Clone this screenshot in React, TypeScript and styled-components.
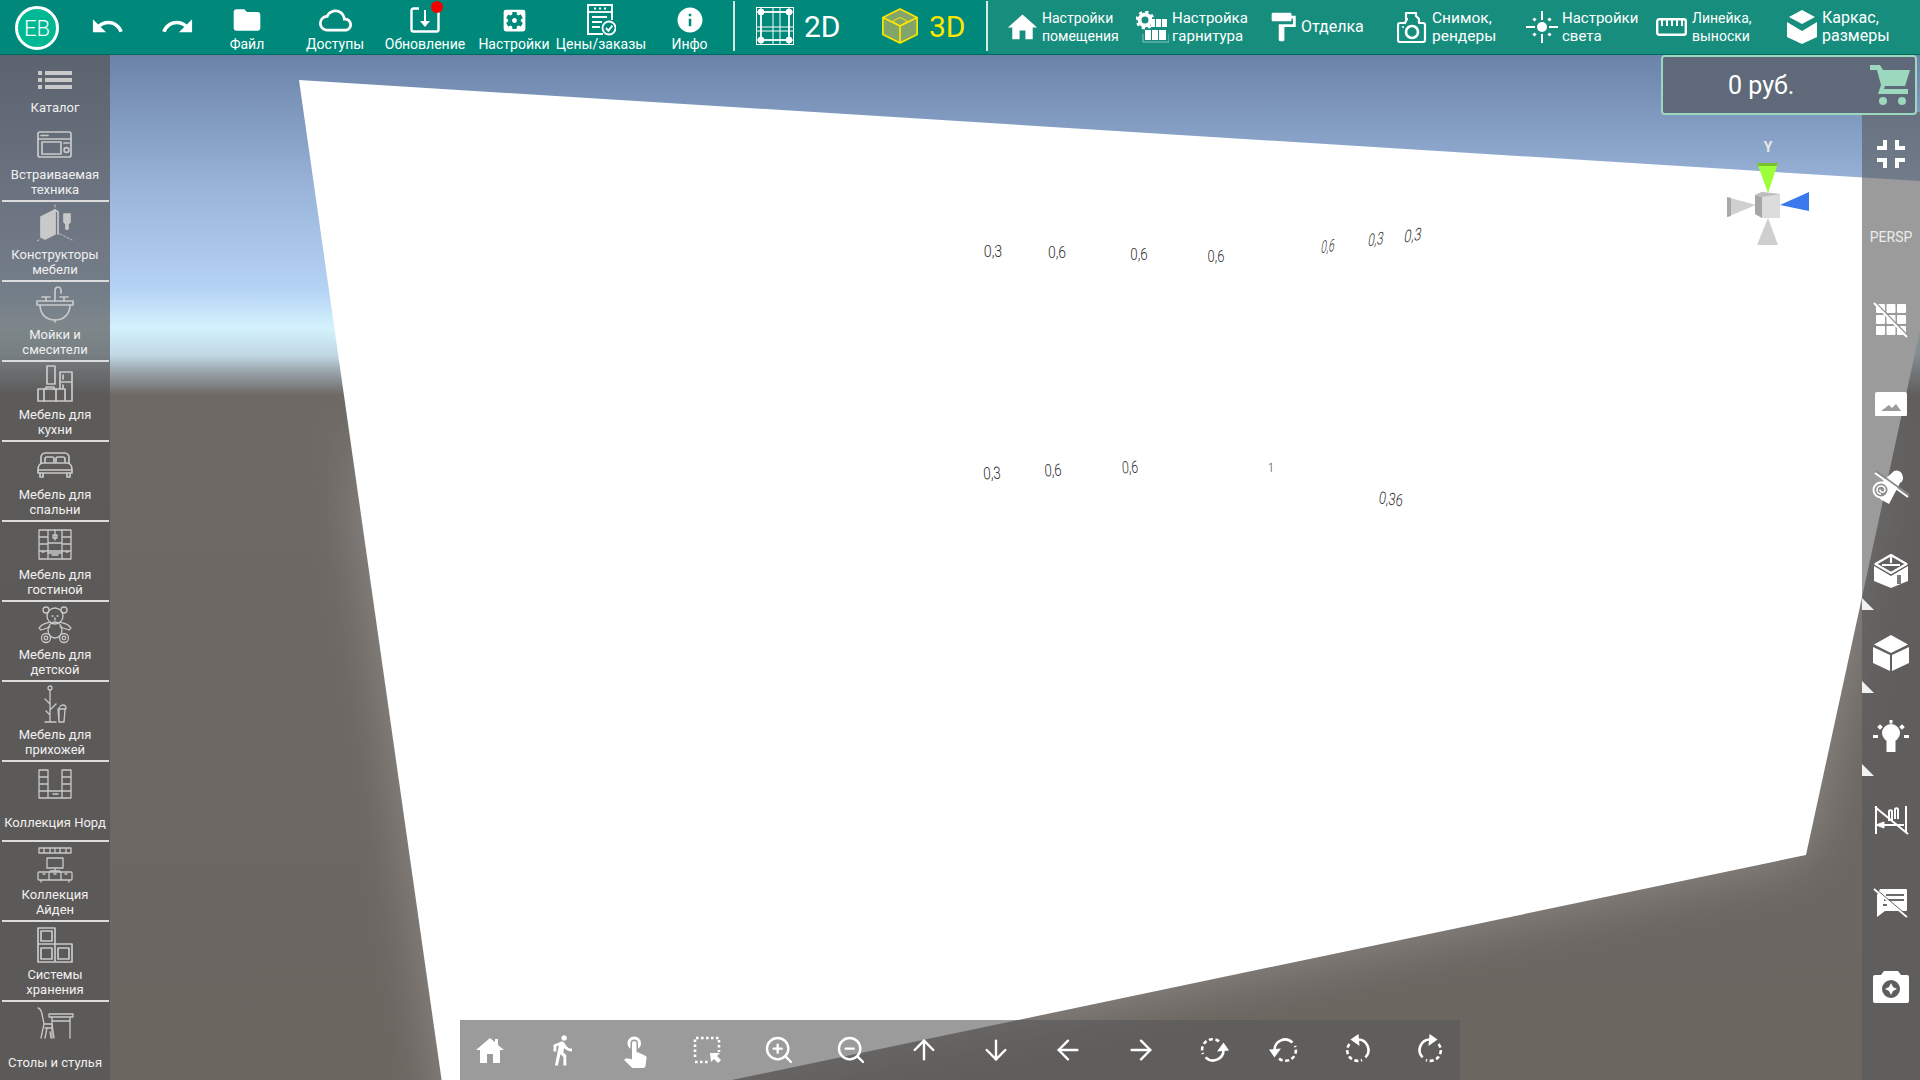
import React from "react"
import styled, { createGlobalStyle } from "styled-components"
import {
  MdCloudQueue,
  MdDirectionsWalk,
  MdFolder,
  MdFormatPaint,
  MdFullscreenExit,
  MdHome,
  MdInfo,
  MdRedo,
  MdSettingsApplications,
  MdTouchApp,
  MdUndo,
} from "react-icons/md"
import { ArrowDown, ArrowLeft, ArrowRight, ArrowUp, ZoomIn, ZoomOut } from "lucide-react"

const GlobalStyle = createGlobalStyle`
  html, body {
    margin: 0;
    padding: 0;
    background: #6c6661;
  }
  body {
    font-family: Roboto, "Liberation Sans", sans-serif;
  }
`

const Screen = styled.div`
  position: relative;
  width: 1920px;
  height: 1080px;
  overflow: hidden;
  display: flex;
  flex-direction: column;
  background: linear-gradient(
    to bottom,
    #6b83a8 55px,
    #9ab4da 190px,
    #b5d3f5 290px,
    #d3f2fc 328px,
    #c0d8e4 355px,
    #9aa3aa 372px,
    #6e6965 395px,
    #6c6661 1080px
  );
`

const SceneCanvas = styled.svg`
  position: absolute;
  left: 0;
  top: 0;
`

const DimLabel = styled.span<{ $x: number; $y: number; $tf: string; $size?: number }>`
  position: absolute;
  left: ${(p) => p.$x}px;
  top: ${(p) => p.$y}px;
  transform: translate(-50%, -50%) ${(p) => p.$tf};
  font-size: ${(p) => p.$size ?? 17}px;
  font-weight: 300;
  color: #2e2e2e;
  white-space: nowrap;
`

const TopBar = styled.header`
  position: relative;
  display: flex;
  height: 54px;
  flex-shrink: 0;
  background: #00897b;
  border-bottom: 1px solid #00695c;
  color: #fff;
`

const Avatar = styled.div`
  width: 38px;
  height: 38px;
  margin: 6px 14px 0 15px;
  border: 3px solid #fff;
  border-radius: 50%;
  background: #00b894;
  display: flex;
  align-items: center;
  justify-content: center;
  font-size: 22px;
  font-weight: 300;
  flex-shrink: 0;
`

const HistoryButton = styled.div`
  width: 70px;
  display: flex;
  align-items: center;
  justify-content: center;
  padding-bottom: 2px;
  margin-left: -1px;
  margin-right: 1px;
`

const NavItem = styled.div<{ $w: number; $ml?: number }>`
  width: ${(p) => p.$w}px;
  margin-left: ${(p) => p.$ml ?? 0}px;
  position: relative;
  display: flex;
  flex-direction: column;
  align-items: center;
  padding-top: 4px;
`

const NavIcon = styled.div`
  height: 32px;
  display: flex;
  align-items: center;
  justify-content: center;
`

const NavLabel = styled.span`
  font-size: 14px;
  line-height: 16px;
  white-space: nowrap;
`

const RedDot = styled.span`
  position: absolute;
  left: 52px;
  top: 1px;
  width: 12px;
  height: 12px;
  border-radius: 50%;
  background: #f40000;
`

const Separator = styled.div`
  width: 2px;
  height: 50px;
  margin-top: 1px;
  background: #d6e8e4;
  flex-shrink: 0;
`

const ViewSwitch = styled.div`
  width: 251px;
  display: flex;
  align-items: center;
  padding: 0 0 2px 21px;
  box-sizing: border-box;
`

const ViewButton = styled.div<{ $active?: boolean; $w: number }>`
  width: ${(p) => p.$w}px;
  display: flex;
  align-items: center;
  gap: 10px;
  font-size: 30px;
  font-weight: 400;
  color: ${(p) => (p.$active ? "#ffe600" : "#fff")};
`

const ToolSection = styled.div`
  flex: 1;
  display: flex;
  padding-left: 20px;
  background: #178d7d;
`

const ToolItem = styled.div<{ $w: number; $iconW: number; $gap: number }>`
  width: ${(p) => p.$w}px;
  display: grid;
  grid-template-columns: ${(p) => p.$iconW}px 1fr;
  column-gap: ${(p) => p.$gap}px;
  align-items: center;
  flex-shrink: 0;
`

const ToolText = styled.div<{ $size: number }>`
  font-size: ${(p) => p.$size}px;
  line-height: 18px;
  white-space: nowrap;
`

const Body = styled.div`
  position: relative;
  flex: 1;
  display: flex;
  min-height: 0;
`

const LeftPanel = styled.nav`
  width: 110px;
  flex-shrink: 0;
  background: rgba(84, 84, 84, 0.68);
  display: flex;
  flex-direction: column;
`

const CatalogItem = styled.div<{ $first?: boolean }>`
  height: ${(p) => (p.$first ? 66 : 80)}px;
  flex-shrink: 0;
  box-sizing: border-box;
  position: relative;
  padding-top: ${(p) => (p.$first ? 13 : 1)}px;
  display: flex;
  flex-direction: column;
  align-items: center;
  &::after {
    content: ${(p) => (p.$first ? "none" : '""')};
    position: absolute;
    left: 2px;
    right: 1px;
    bottom: -1px;
    height: 2px;
    background: #dcdcdc;
  }
`

const CatalogIcon = styled.div<{ $first?: boolean }>`
  height: ${(p) => (p.$first ? 24 : 45)}px;
  display: flex;
  align-items: center;
  justify-content: center;
  flex-shrink: 0;
`

const CatalogLabel = styled.div`
  height: 30px;
  width: 110px;
  flex-shrink: 0;
  display: flex;
  align-items: center;
  justify-content: center;
  text-align: center;
  font-size: 13px;
  line-height: 15px;
  color: #f0f0f0;
  white-space: pre-line;
`

const Glyph = styled.svg`
  width: 42px;
  height: 42px;
  fill: none;
  stroke: #c9c9c9;
  stroke-width: 1.7;
  stroke-linejoin: round;
  stroke-linecap: round;
  overflow: visible;
`

const Stage = styled.main`
  position: relative;
  flex: 1;
  display: flex;
  align-items: flex-end;
  padding-left: 350px;
`

const BottomBar = styled.div`
  width: 1000px;
  height: 60px;
  display: flex;
  justify-content: space-between;
  background: rgba(88, 88, 88, 0.6);
`

const BottomButton = styled.div`
  width: 60px;
  display: flex;
  align-items: center;
  justify-content: center;
  color: #fff;
`

const Gizmo = styled.svg`
  position: absolute;
  left: 1600px;
  top: 75px;
  overflow: visible;
`

const CartBox = styled.div`
  position: absolute;
  left: 1551px;
  top: 0;
  width: 256px;
  height: 60px;
  box-sizing: border-box;
  border: 2px solid #9bd8bd;
  border-radius: 4px;
  background: #5f6979;
  color: #fff;
  font-size: 25px;
  display: flex;
  align-items: center;
  padding-left: 65px;
  z-index: 2;
`

const CartIcon = styled.svg`
  position: absolute;
  right: 5px;
  top: 8px;
`

const RightPanel = styled.aside`
  width: 58px;
  margin-top: 57px;
  flex-shrink: 0;
  background: rgba(88, 88, 88, 0.6);
  display: flex;
  flex-direction: column;
`

const RightButton = styled.div<{ $mark?: boolean }>`
  position: relative;
  height: 83.3px;
  flex-shrink: 0;
  display: flex;
  align-items: center;
  justify-content: center;
  color: #fff;
  &::after {
    content: ${(p) => (p.$mark ? '""' : "none")};
    position: absolute;
    left: 0;
    bottom: 2px;
    width: 0;
    height: 0;
    border-style: solid;
    border-width: 12px 0 0 12px;
    border-color: transparent transparent transparent #f2f2f2;
  }
`

const PerspLabel = styled.span`
  font-size: 14px;
  color: #ececec;
`

const dims = [
  { t: "0,3", x: 993, y: 251, tf: "scaleX(.84)" },
  { t: "0,6", x: 1057, y: 252, tf: "scaleX(.82)" },
  { t: "0,6", x: 1139, y: 254, tf: "scaleX(.78)" },
  { t: "0,6", x: 1216, y: 256, tf: "scaleX(.76)" },
  { t: "0,6", x: 1328, y: 246, tf: "skewY(-10deg) skewX(-8deg) scaleX(.6)" },
  { t: "0,3", x: 1376, y: 239, tf: "skewY(-10deg) skewX(-8deg) scaleX(.7)" },
  { t: "0,3", x: 1413, y: 235, tf: "skewY(-10deg) skewX(-8deg) scaleX(.78)" },
  { t: "0,3", x: 992, y: 473, tf: "rotate(-3deg) scaleX(.8)" },
  { t: "0,6", x: 1053, y: 470, tf: "rotate(-3deg) scaleX(.78)" },
  { t: "0,6", x: 1130, y: 467, tf: "rotate(-3deg) scaleX(.74)" },
  { t: "1", x: 1271, y: 467, tf: "scaleX(.8)", size: 13 },
  { t: "0,36", x: 1391, y: 499, tf: "rotate(8deg) scaleX(.76)" },
]

function CameraTool() {
  return (
    <svg width="30" height="32" viewBox="0 0 30 32" fill="none" stroke="#fff" strokeWidth="2.2" strokeLinejoin="round">
      <path d="M3 12h5l2-4h-1V2h10v3l3 3v4h4c1 0 2 1 2 2v15c0 1-1 2-2 2H3c-1 0-2-1-2-2V14c0-1 1-2 2-2z" />
      <circle cx="15" cy="21" r="6" strokeWidth="2.6" />
      <circle cx="6" cy="16" r="1" fill="#fff" stroke="none" />
    </svg>
  )
}

function LightTool() {
  return (
    <svg width="32" height="32" viewBox="0 0 32 32" fill="#fff">
      <circle cx="16" cy="16" r="5" />
      <rect x="15" y="0" width="2" height="9" />
      <rect x="15" y="23" width="2" height="9" />
      <rect x="0" y="15" width="9" height="2" />
      <rect x="23" y="15" width="9" height="2" />
      <rect x="7" y="7" width="3" height="3" transform="rotate(45 8.5 8.5)" />
      <rect x="22" y="7" width="3" height="3" transform="rotate(45 23.5 8.5)" />
      <rect x="7" y="22" width="3" height="3" transform="rotate(45 8.5 23.5)" />
      <rect x="22" y="22" width="3" height="3" transform="rotate(45 23.5 23.5)" />
    </svg>
  )
}

function RulerTool() {
  return (
    <svg width="31" height="18" viewBox="0 0 31 18" fill="none" stroke="#fff" strokeWidth="2.4">
      <rect x="1.2" y="1.2" width="28.6" height="15.6" rx="2" />
      <path d="M6 2v6M11 2v6M16 2v6M21 2v6M26 2v6" strokeWidth="2" />
    </svg>
  )
}

function CubeTool() {
  return (
    <svg width="30" height="34" viewBox="0 0 30 34" fill="#fff">
      <path d="M15 0l13 7-13 7L2 7z" />
      <path d="M0 12l15 9 15-9v15l-15 7-15-7z" />
    </svg>
  )
}

function KitchenTool() {
  return (
    <svg width="33" height="32" viewBox="0 0 33 32" fill="#fff">
      <circle cx="9" cy="9" r="5.5" fill="none" stroke="#fff" strokeWidth="4" />
      <circle cx="9" cy="9" r="8" fill="none" stroke="#fff" strokeWidth="3" strokeDasharray="3 3.3" />
      <rect x="15" y="8" width="4" height="8" />
      <rect x="20" y="8" width="5" height="8" />
      <rect x="26" y="8" width="5" height="8" />
      <rect x="9" y="19" width="6" height="10" />
      <rect x="16" y="19" width="6" height="10" />
      <rect x="23" y="19" width="7" height="10" />
      <path d="M7 23v8h26v-8" fill="none" stroke="#fff" strokeOpacity=".5" />
    </svg>
  )
}

function UpdateIcon() {
  return (
    <svg width="30" height="26" viewBox="0 0 30 26" fill="none" stroke="#fff">
      <path d="M9 1.5H3.5a2 2 0 0 0-2 2v19a2 2 0 0 0 2 2h23a2 2 0 0 0 2-2V1.5" strokeWidth="2.4" />
      <path d="M15 3v14" strokeWidth="2" />
      <path d="M10 14h10l-5 6z" fill="#fff" stroke="none" />
    </svg>
  )
}

function PricesIcon() {
  return (
    <svg width="30" height="32" viewBox="0 0 30 32" fill="none" stroke="#fff" strokeWidth="1.8">
      <path d="M17 30H2V1h24v15" strokeWidth="2" />
      <path d="M2 8h24" />
      <path d="M8 4.5h2M13 4.5h2M18 4.5h2" strokeWidth="2" />
      <path d="M6 13h15M6 18h10M6 23h8" strokeWidth="2" />
      <circle cx="23" cy="24" r="6.5" fill="#00897b" />
      <path d="M20 24l2.4 2.6 4-5" strokeWidth="2" />
    </svg>
  )
}

function GridViewIcon() {
  return (
    <svg width="38" height="38" viewBox="0 0 38 38" fill="none" stroke="#fff" strokeWidth="1">
      <rect x=".5" y=".5" width="37" height="37" />
      <path d="M5 1v36M17 1v36M24 1v36M33 1v36M1 5h36M1 20h36M1 24h36M1 33h36" />
      <rect x="5" y="5" width="28" height="28" strokeWidth="1.6" />
      <circle cx="5" cy="5" r="3" fill="#fff" />
      <circle cx="33" cy="5" r="3" fill="#fff" />
      <circle cx="5" cy="33" r="3" fill="#fff" />
      <circle cx="33" cy="33" r="3" fill="#fff" />
    </svg>
  )
}

function CubeViewIcon() {
  return (
    <svg width="38" height="38" viewBox="0 0 40 38" fill="#82a569" stroke="#ffe600" strokeWidth="1.8" strokeLinejoin="round">
      <path d="M20 1l18 9v18l-18 9-18-9V10z" />
      <path d="M2 10l18 9 18-9M20 19v18" fill="none" />
      <path d="M20 10l-8 4 8 5 8-5z" fill="none" strokeWidth="1" />
    </svg>
  )
}

const CatalogGlyphs: React.ReactNode[] = [
  <Glyph viewBox="0 0 42 42" key="catalog" style={{ strokeWidth: 0, fill: "#c9c9c9" }}>
    <rect x="4" y="12" width="4" height="4" />
    <rect x="4" y="19" width="4" height="4" />
    <rect x="4" y="26" width="4" height="4" />
    <rect x="11" y="12" width="27" height="4" />
    <rect x="11" y="19" width="27" height="4" />
    <rect x="11" y="26" width="27" height="4" />
  </Glyph>,
  <Glyph viewBox="0 0 42 42" key="oven">
    <rect x="4" y="8" width="33" height="25" rx="2" />
    <path d="M4 15h33M7 11.5h7" />
    <rect x="8" y="18" width="19" height="12" />
    <circle cx="32.5" cy="26" r="2.4" />
    <path d="M30 19h5" />
  </Glyph>,
  <Glyph viewBox="0 0 42 42" key="builder">
    <path d="M7 13l14-7v24l-10 5-4-2z" fill="#c9c9c9" />
    <path d="M11 14v20M21 6l3 2v22" />
    <path d="M30 10h6v8l-2 2v5h-2v-5l-2-2z" fill="#c9c9c9" />
    <path d="M21 1v4M5 36l-2 1M26 30l12 6" strokeDasharray="2 2" strokeWidth="1" />
  </Glyph>,
  <Glyph viewBox="0 0 42 42" key="sink">
    <path d="M21 17V7c0-2 1-4 3-4s3 2 3 4v2" />
    <path d="M12 17v-4M8 13h8M30 17v-4M26 13h8" />
    <path d="M3 17h36v4H3z" />
    <path d="M6 21c0 9 6 15 15 15s15-6 15-15" />
    <path d="M21 36v2" />
  </Glyph>,
  <Glyph viewBox="0 0 42 42" key="kitchen">
    <path d="M13 2h8v18h-8z" />
    <path d="M4 37V25h27v12zM31 37h7V8H26v17M26 18h12M29 11v4M29 21v4M4 30" />
    <path d="M10 25v12M22 25v12M12 25v-2h8v2" />
  </Glyph>,
  <Glyph viewBox="0 0 42 42" key="bed">
    <path d="M7 19v-6c0-2 2-4 4-4h20c2 0 4 2 4 4v6" />
    <path d="M11 18v-3c0-1 1-2 2-2h5c1 0 2 1 2 2v3M22 18v-3c0-1 1-2 2-2h5c1 0 2 1 2 2v3" />
    <path d="M4 26c0-4 2-7 5-7h24c3 0 5 3 5 7v3H4zM4 26h34" />
    <path d="M6 29v4h3v-4M33 29v4h3v-4" />
  </Glyph>,
  <Glyph viewBox="0 0 42 42" key="wall" style={{ strokeWidth: 1.3 }}>
    <path d="M5 6h32v29H5zM14 6v29M28 6v29M5 13h9M5 20h9M28 13h9M28 20h9M14 19h14M5 27h32M5 31" />
    <path d="M21 6v10M19 11h4v3h-4zM14 29h14M18 31h6M8 28h2M32 28h2" />
  </Glyph>,
  <Glyph viewBox="0 0 42 42" key="bear" style={{ strokeWidth: 1.3 }}>
    <circle cx="21" cy="12" r="8" />
    <circle cx="12" cy="6" r="3" />
    <circle cx="30" cy="6" r="3" />
    <path d="M16 18c-2 1-5 1-8 3l-3 3 2 2 9-3M26 18c2 1 5 1 8 3l3 3-2 2-9-3" />
    <ellipse cx="21" cy="26" rx="7" ry="8" />
    <circle cx="12" cy="34" r="4.5" />
    <circle cx="30" cy="34" r="4.5" />
    <circle cx="12" cy="34" r="1.8" />
    <circle cx="30" cy="34" r="1.8" />
    <path d="M18 12h1M23 12h1M21 14v2" />
  </Glyph>,
  <Glyph viewBox="0 0 42 42" key="rack" style={{ strokeWidth: 1.3 }}>
    <circle cx="16" cy="4" r="2" />
    <path d="M16 6v32M11 38h11M16 20l-5-5M16 26l6-6M16 31l-4-4" />
    <path d="M25 38V26c0-3 2-5 4-5s3 2 3 4h-8l1 13h5l1-13" />
  </Glyph>,
  <Glyph viewBox="0 0 42 42" key="nord" style={{ strokeWidth: 1.3 }}>
    <path d="M5 6h9v28H5zM28 6h9v28h-9zM5 13h9M5 20h9M28 13h9M28 20h9M5 27h32M5 34h32M14 27v7M28 27v7M19 30h5" />
  </Glyph>,
  <Glyph viewBox="0 0 42 42" key="aiden" style={{ strokeWidth: 1.3 }}>
    <path d="M5 4h32v5H5zM10 4v5M16 4v5M21 4v5M26 4v5M32 4v5" />
    <path d="M13 14h16v10H13zM21 24v3M16 27h10" />
    <path d="M5 28h32c1 0 1 1 1 1v6c0 1-1 1-1 1H5c-1 0-1-1-1-1v-6s0-1 1-1zM15 28v8M27 28v8M9 30h2M20 30h2M31 30h2M7 36v2M35 36v2" />
  </Glyph>,
  <Glyph viewBox="0 0 42 42" key="storage">
    <path d="M4 4h17v34H4zM21 20h17v18H21zM4 20h17" />
    <rect x="7" y="7" width="11" height="10" />
    <rect x="7" y="24" width="11" height="11" />
    <rect x="24" y="24" width="11" height="11" />
  </Glyph>,
  <Glyph viewBox="0 0 42 42" key="table" style={{ strokeWidth: 1.3 }}>
    <path d="M15 10h24v3H15zM18 13v21M36 13v21M18 17h18" />
    <path d="M4 4c2 0 3 2 4 6l2 10-3 14M10 20h8l2 14M11 24h7M16 28l1 6" />
    <path d="M11 34l2-10" />
  </Glyph>,
]

const catalog = [
  { label: "Каталог", first: true },
  { label: "Встраиваемая\nтехника" },
  { label: "Конструкторы\nмебели" },
  { label: "Мойки и\nсмесители" },
  { label: "Мебель для\nкухни" },
  { label: "Мебель для\nспальни" },
  { label: "Мебель для\nгостиной" },
  { label: "Мебель для\nдетской" },
  { label: "Мебель для\nприхожей" },
  { label: "Коллекция Норд" },
  { label: "Коллекция\nАйден" },
  { label: "Системы\nхранения" },
  { label: "Столы и стулья" },
]

function HomeChimney() {
  return (
    <svg width="28" height="25" viewBox="0 0 28 25" fill="#fff">
      <path d="M14 0l5 4.3V1h3v6l6 5h-4v13h-7v-9h-6v9H4V12H0z" />
    </svg>
  )
}

function SelectIcon() {
  return (
    <svg width="28" height="28" viewBox="0 0 28 28" fill="none" stroke="#fff">
      <path d="M2 21V2h24v14M2 26h14" strokeWidth="2.6" strokeDasharray="2.6 2.4" />
      <path d="M17 17h10l-3 3 4 4-3 3-4-4-3 3z" fill="#fff" stroke="none" />
    </svg>
  )
}

const rotateTransforms = ["", "rotate(180 15 15)", "rotate(-90 15 15)", "translate(30 0) scale(-1 1) rotate(-90 15 15)"]

function RotateIcon({ kind }: { kind: number }) {
  return (
    <svg width="30" height="30" viewBox="0 0 30 30" fill="none" stroke="#fff" strokeWidth="2.6" style={{ overflow: "visible" }}>
      <g transform={rotateTransforms[kind]}>
        <path d="M7.6 22.4A10.5 10.5 0 0 0 25.5 15" />
        <path d="M21 6.4A10.5 10.5 0 0 0 5 19" strokeDasharray="4 2.6" />
        <path d="M19 16.5l12-1-5.5-8z" fill="#fff" stroke="none" />
      </g>
    </svg>
  )
}

function GridOff() {
  return (
    <svg width="36" height="36" viewBox="0 0 36 36" fill="#fff">
      <rect x="3" y="2" width="9" height="9" rx="1" />
      <rect x="13.5" y="2" width="9" height="9" rx="1" />
      <rect x="24" y="2" width="9" height="9" rx="1" />
      <rect x="3" y="13" width="9" height="9" rx="1" />
      <rect x="13.5" y="13" width="9" height="9" rx="1" />
      <rect x="24" y="13" width="9" height="9" rx="1" />
      <rect x="3" y="24" width="9" height="9" rx="1" />
      <rect x="13.5" y="24" width="9" height="9" rx="1" />
      <rect x="24" y="24" width="9" height="9" rx="1" />
      <path d="M3 1l33 34" stroke="#929292" strokeWidth="1.6" />
      <path d="M1 1l33 34" stroke="#fff" strokeWidth="2" />
    </svg>
  )
}

function ImageIcon() {
  return (
    <svg width="34" height="26" viewBox="0 0 34 26">
      <path
        fillRule="evenodd"
        fill="#fff"
        d="M3 1h28a2 2 0 0 1 2 2v21a1 1 0 0 1-1 1H2a1 1 0 0 1-1-1V3a2 2 0 0 1 2-2zM7 20h20l-5-7-4 4-3-3z"
      />
    </svg>
  )
}

function CarpetOff() {
  return (
    <svg width="38" height="36" viewBox="0 0 38 36" fill="none" stroke="#fff">
      <path d="M10 13L22 2c4-2 9 1 9 7 0 2-1 4-3 5L17 35l-9-5z" fill="#fff" stroke="none" />
      <circle cx="9" cy="21" r="7.5" fill="#8f8f8f" strokeWidth="2" />
      <path d="M9 25a4 4 0 1 1 4-4 2.5 2.5 0 1 1-5-.5" strokeWidth="1.6" />
      <path d="M4 2l33 24" stroke="#8a8a8a" strokeWidth="1.6" />
      <path d="M3 4l33 24" strokeWidth="2" />
    </svg>
  )
}

function OpenBox() {
  return (
    <svg width="36" height="36" viewBox="0 0 36 36" fill="none" stroke="#fff">
      <path d="M1 14l17 10 17-10v15l-17 7-17-7z" fill="#fff" stroke="none" />
      <path d="M2.5 12L18 3l15.5 9L18 21zM18 3v8M9 13l9 0M27 13l-9 0" strokeWidth="2.2" strokeLinejoin="round" />
      <rect x="24" y="23" width="4" height="9" fill="#7c7c7c" stroke="none" />
    </svg>
  )
}

function ClosedCube() {
  return (
    <svg width="36" height="36" viewBox="0 0 36 36" fill="#fff">
      <path d="M18 0l17 9.5L18 18 1 9.5z" />
      <path d="M0 12l17 8v16L0 28z" />
      <path d="M36 12l-17 8v16l17-8z" />
    </svg>
  )
}

function Bulb() {
  return (
    <svg width="36" height="34" viewBox="0 0 36 34" fill="#fff">
      <circle cx="18" cy="13" r="9" />
      <rect x="13.5" y="19" width="9" height="13" />
      <rect x="16.5" y="0" width="3" height="3.5" />
      <rect x="0" y="15" width="5" height="3" />
      <rect x="31" y="15" width="5" height="3" />
      <rect x="5" y="5" width="4" height="4" transform="rotate(45 7 7)" />
      <rect x="27" y="5" width="4" height="4" transform="rotate(45 29 7)" />
    </svg>
  )
}

function DimOff() {
  return (
    <svg width="36" height="30" viewBox="0 0 36 30" fill="none" stroke="#fff">
      <path d="M3 1v28M33 1v26M3 20h28" strokeWidth="2" />
      <path d="M3 20l8-3v6z" fill="#fff" />
      <path d="M16 16V6c0-1 3-1 3 0v10M22 14V4c0-1 3-1 3 0v10" strokeWidth="2" />
      <path d="M2 2l33 27" strokeWidth="2" />
    </svg>
  )
}

function NoteOff() {
  return (
    <svg width="36" height="30" viewBox="0 0 36 30">
      <path d="M7 1h26a1 1 0 0 1 1 1v20a1 1 0 0 1-1 1H12l-8 6V7z" fill="#fff" />
      <path d="M13 7h18M11 12h20M10 17h4" stroke="#6a6a6a" strokeWidth="2" />
      <path d="M1 1l33 28" stroke="#fff" strokeWidth="2" />
      <path d="M3 1l33 28" stroke="#666" strokeWidth="1" />
    </svg>
  )
}

function CameraAdd() {
  return (
    <svg width="36" height="32" viewBox="0 0 36 32">
      <path
        fill="#fff"
        fillRule="evenodd"
        d="M11 0h14l3 4h6a2 2 0 0 1 2 2v24a2 2 0 0 1-2 2H2a2 2 0 0 1-2-2V6a2 2 0 0 1 2-2h6zM18 9a9 9 0 1 0 0 18 9 9 0 0 0 0-18z"
      />
      <path d="M18 12l2 4 4 2-4 2-2 4-2-4-4-2 4-2z" fill="#fff" />
    </svg>
  )
}

export default function App(): JSX.Element {
  return (
    <>
      <GlobalStyle />
      <Screen>
        <SceneCanvas width="1920" height="1080" viewBox="0 0 1920 1080">
          <defs>
            <filter id="glow" x="-20%" y="-20%" width="140%" height="140%">
              <feGaussianBlur stdDeviation="28" />
            </filter>
            <linearGradient id="groundFade" x1="0" y1="395" x2="0" y2="520" gradientUnits="userSpaceOnUse">
              <stop offset="0" stopColor="#fff" stopOpacity="0" />
              <stop offset="1" stopColor="#fff" stopOpacity="1" />
            </linearGradient>
            <mask id="ground" maskUnits="userSpaceOnUse" x="0" y="0" width="1920" height="1080">
              <rect x="0" y="395" width="1920" height="685" fill="url(#groundFade)" />
            </mask>
          </defs>
          <g mask="url(#ground)">
            <polygon points="299,80 1952,183 1806,855 450,1139" fill="#fff" opacity="0.24" filter="url(#glow)" />
          </g>
          <polygon points="299,80 1952,183 1806,855 450,1139" fill="#fff" />
        </SceneCanvas>
        {dims.map((d, i) => (
          <DimLabel key={i} $x={d.x} $y={d.y} $tf={d.tf} $size={d.size}>
            {d.t}
          </DimLabel>
        ))}

        <TopBar>
          <Avatar>EB</Avatar>
          <HistoryButton>
            <MdUndo size={35} />
          </HistoryButton>
          <HistoryButton>
            <MdRedo size={35} />
          </HistoryButton>
          <NavItem $w={68}>
            <NavIcon>
              <MdFolder size={32} />
            </NavIcon>
            <NavLabel>Файл</NavLabel>
          </NavItem>
          <NavItem $w={88} $ml={10}>
            <NavIcon>
              <MdCloudQueue size={33} />
            </NavIcon>
            <NavLabel>Доступы</NavLabel>
          </NavItem>
          <NavItem $w={92}>
            <RedDot />
            <NavIcon>
              <UpdateIcon />
            </NavIcon>
            <NavLabel>Обновление</NavLabel>
          </NavItem>
          <NavItem $w={86}>
            <NavIcon>
              <MdSettingsApplications size={29} />
            </NavIcon>
            <NavLabel>Настройки</NavLabel>
          </NavItem>
          <NavItem $w={88}>
            <NavIcon>
              <PricesIcon />
            </NavIcon>
            <NavLabel>Цены/заказы</NavLabel>
          </NavItem>
          <NavItem $w={87} $ml={1}>
            <NavIcon>
              <MdInfo size={30} />
            </NavIcon>
            <NavLabel>Инфо</NavLabel>
          </NavItem>
          <Separator />
          <ViewSwitch>
            <ViewButton $w={125}>
              <GridViewIcon />
              2D
            </ViewButton>
            <ViewButton $active $w={100}>
              <CubeViewIcon />
              3D
            </ViewButton>
          </ViewSwitch>
          <Separator />
          <ToolSection>
            <ToolItem $w={128} $iconW={29} $gap={5}>
              <MdHome size={35} style={{ marginLeft: -3 }} />
              <ToolText $size={14}>
                Настройки
                <br />
                помещения
              </ToolText>
            </ToolItem>
            <ToolItem $w={135} $iconW={33} $gap={3}>
              <KitchenTool />
              <ToolText $size={15}>
                Настройка
                <br />
                гарнитура
              </ToolText>
            </ToolItem>
            <ToolItem $w={126} $iconW={24} $gap={6}>
              <MdFormatPaint size={34} style={{ marginLeft: -5 }} />
              <ToolText $size={16}>Отделка</ToolText>
            </ToolItem>
            <ToolItem $w={129} $iconW={30} $gap={5}>
              <CameraTool />
              <ToolText $size={15.5}>
                Снимок,
                <br />
                рендеры
              </ToolText>
            </ToolItem>
            <ToolItem $w={130} $iconW={32} $gap={4}>
              <LightTool />
              <ToolText $size={15}>
                Настройки
                <br />
                света
              </ToolText>
            </ToolItem>
            <ToolItem $w={131} $iconW={31} $gap={5}>
              <RulerTool />
              <ToolText $size={14}>
                Линейка,
                <br />
                выноски
              </ToolText>
            </ToolItem>
            <ToolItem $w={110} $iconW={30} $gap={5}>
              <CubeTool />
              <ToolText $size={16}>
                Каркас,
                <br />
                размеры
              </ToolText>
            </ToolItem>
          </ToolSection>
        </TopBar>

        <Body>
          <LeftPanel>
            {catalog.map((c, i) => (
              <CatalogItem key={c.label} $first={c.first}>
                <CatalogIcon $first={c.first}>{CatalogGlyphs[i]}</CatalogIcon>
                <CatalogLabel>{c.label}</CatalogLabel>
              </CatalogItem>
            ))}
          </LeftPanel>

          <Stage>
            <Gizmo width="100" height="110" viewBox="0 0 100 110">
              <text x="58" y="22" textAnchor="middle" fontSize="14" fontWeight="700" fill="#e8e8e8" fontFamily="Roboto, sans-serif">
                Y
              </text>
              <polygon points="47,33 68,33 58,63" fill="#9cff3a" />
              <polygon points="47,33 68,33 67,36 48,36" fill="#78c02c" />
              <polygon points="70,75 99,62 99,81" fill="#3a78ee" />
              <polygon points="46,75 17,67 17,87" fill="#d0d0d0" />
              <polygon points="17,67 21,68 21,86 17,87" fill="#a8a8a8" />
              <polygon points="58,88 47,115 68,115" fill="#cfcfcf" />
              <polygon points="45,65 52,62 70,64 70,88 52,88 45,84" fill="#dcdcdc" />
              <polygon points="45,65 52,67 52,88 45,84" fill="#a6a6a6" />
              <polygon points="45,65 52,62 70,64 52,67" fill="#bdbdbd" />
            </Gizmo>
            <BottomBar>
              <BottomButton>
                <HomeChimney />
              </BottomButton>
              <BottomButton>
                <MdDirectionsWalk size={34} />
              </BottomButton>
              <BottomButton>
                <MdTouchApp size={36} />
              </BottomButton>
              <BottomButton>
                <SelectIcon />
              </BottomButton>
              <BottomButton>
                <ZoomIn size={32} strokeWidth={1.8} />
              </BottomButton>
              <BottomButton>
                <ZoomOut size={32} strokeWidth={1.8} />
              </BottomButton>
              <BottomButton>
                <ArrowUp size={32} strokeWidth={1.8} />
              </BottomButton>
              <BottomButton>
                <ArrowDown size={32} strokeWidth={1.8} />
              </BottomButton>
              <BottomButton>
                <ArrowLeft size={32} strokeWidth={1.8} />
              </BottomButton>
              <BottomButton>
                <ArrowRight size={32} strokeWidth={1.8} />
              </BottomButton>
              <BottomButton>
                <RotateIcon kind={0} />
              </BottomButton>
              <BottomButton>
                <RotateIcon kind={1} />
              </BottomButton>
              <BottomButton>
                <RotateIcon kind={2} />
              </BottomButton>
              <BottomButton>
                <RotateIcon kind={3} />
              </BottomButton>
            </BottomBar>
            <CartBox>
              0 руб.
              <CartIcon width="40" height="40" viewBox="0 0 40 40" fill="#9bd8bd">
                <path d="M0 0h10l3 5h27l-5 16H15l-1 3h24v5H8l3-9L7 5H0z" />
                <circle cx="13" cy="36" r="4" />
                <circle cx="32" cy="36" r="4" />
              </CartIcon>
            </CartBox>
          </Stage>

          <RightPanel>
            <RightButton>
              <MdFullscreenExit size={48} />
            </RightButton>
            <RightButton>
              <PerspLabel>PERSP</PerspLabel>
            </RightButton>
            <RightButton>
              <GridOff />
            </RightButton>
            <RightButton>
              <ImageIcon />
            </RightButton>
            <RightButton>
              <CarpetOff />
            </RightButton>
            <RightButton $mark>
              <OpenBox />
            </RightButton>
            <RightButton $mark>
              <ClosedCube />
            </RightButton>
            <RightButton $mark>
              <Bulb />
            </RightButton>
            <RightButton>
              <DimOff />
            </RightButton>
            <RightButton>
              <NoteOff />
            </RightButton>
            <RightButton>
              <CameraAdd />
            </RightButton>
          </RightPanel>
        </Body>
      </Screen>
    </>
  )
}
